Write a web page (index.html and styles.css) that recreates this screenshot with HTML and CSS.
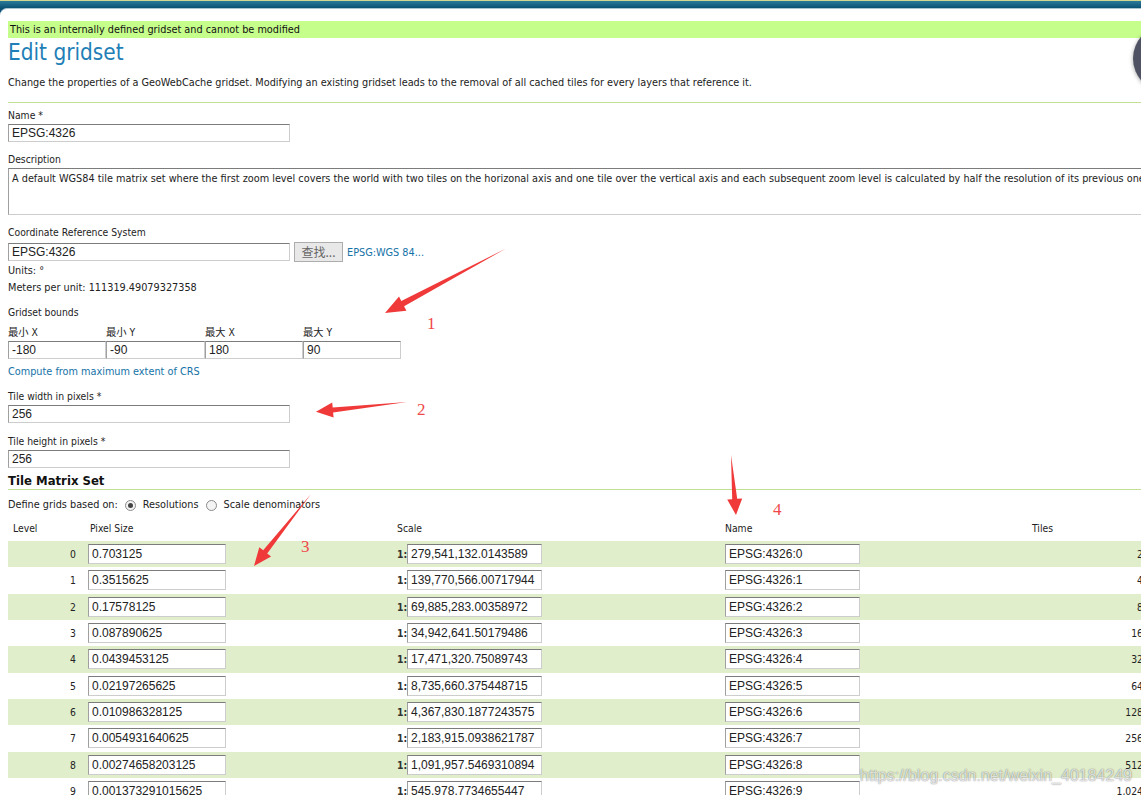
FILE: index.html
```html
<!DOCTYPE html>
<html>
<head>
<meta charset="utf-8">
<title>Edit gridset</title>
<link rel="stylesheet" href="styles.css">
</head>
<body>
<div class="shell">
  <div class="page">
    <div class="notice">This is an internally defined gridset and cannot be modified</div>
    <h1 class="title">Edit gridset</h1>
    <p class="intro">Change the properties of a GeoWebCache gridset. Modifying an existing gridset leads to the removal of all cached tiles for every layers that reference it.</p>
    <div class="sep"></div>

    <div class="field field-name">
      <label class="lbl">Name *</label>
      <input class="txt w282" type="text" value="EPSG:4326">
    </div>

    <div class="field field-desc">
      <label class="lbl">Description</label>
      <textarea class="area" wrap="off">A default WGS84 tile matrix set where the first zoom level covers the world with two tiles on the horizonal axis and one tile over the vertical axis and each subsequent zoom level is calculated by half the resolution of its previous one.</textarea>
    </div>

    <div class="field field-crs">
      <label class="lbl">Coordinate Reference System</label>
      <div class="crs-row">
        <input class="txt w282" type="text" value="EPSG:4326">
        <button class="btn">查找...</button>
        <a class="link">EPSG:WGS 84...</a>
      </div>
    </div>
    <div class="info">Units: °</div>
    <div class="info">Meters per unit: 111319.49079327358</div>

    <div class="lbl bounds-title">Gridset bounds</div>
    <div class="bounds">
      <div class="bcell"><label class="blbl">最小 X</label><input class="txt bin" type="text" value="-180"></div>
      <div class="bcell"><label class="blbl">最小 Y</label><input class="txt bin" type="text" value="-90"></div>
      <div class="bcell"><label class="blbl">最大 X</label><input class="txt bin" type="text" value="180"></div>
      <div class="bcell"><label class="blbl">最大 Y</label><input class="txt bin" type="text" value="90"></div>
    </div>
    <a class="link compute">Compute from maximum extent of CRS</a>

    <div class="field field-tw">
      <label class="lbl">Tile width in pixels *</label>
      <input class="txt w282" type="text" value="256">
    </div>
    <div class="field field-th">
      <label class="lbl">Tile height in pixels *</label>
      <input class="txt w282" type="text" value="256">
    </div>

    <h2 class="section">Tile Matrix Set</h2>
    <div class="define">
      <span>Define grids based on:</span>
      <span class="radio checked"></span><span>Resolutions</span>
      <span class="radio"></span><span>Scale denominators</span>
    </div>

    <table class="grid">
      <colgroup>
        <col class="c-level"><col class="c-pix"><col class="c-scale"><col class="c-name"><col class="c-tiles">
      </colgroup>
      <thead>
        <tr><th class="h-level">Level</th><th class="h-pix">Pixel Size</th><th>Scale</th><th>Name</th><th>Tiles</th></tr>
      </thead>
      <tbody>
        <tr class="odd"><td class="lv">0</td><td><input class="txt tin" value="0.703125"></td><td><span class="one">1:</span><input class="txt sin" value="279,541,132.0143589"></td><td><input class="txt sin" value="EPSG:4326:0"></td><td class="tiles">2</td></tr>
        <tr><td class="lv">1</td><td><input class="txt tin" value="0.3515625"></td><td><span class="one">1:</span><input class="txt sin" value="139,770,566.00717944"></td><td><input class="txt sin" value="EPSG:4326:1"></td><td class="tiles">4</td></tr>
        <tr class="odd"><td class="lv">2</td><td><input class="txt tin" value="0.17578125"></td><td><span class="one">1:</span><input class="txt sin" value="69,885,283.00358972"></td><td><input class="txt sin" value="EPSG:4326:2"></td><td class="tiles">8</td></tr>
        <tr><td class="lv">3</td><td><input class="txt tin" value="0.087890625"></td><td><span class="one">1:</span><input class="txt sin" value="34,942,641.50179486"></td><td><input class="txt sin" value="EPSG:4326:3"></td><td class="tiles">16</td></tr>
        <tr class="odd"><td class="lv">4</td><td><input class="txt tin" value="0.0439453125"></td><td><span class="one">1:</span><input class="txt sin" value="17,471,320.75089743"></td><td><input class="txt sin" value="EPSG:4326:4"></td><td class="tiles">32</td></tr>
        <tr><td class="lv">5</td><td><input class="txt tin" value="0.02197265625"></td><td><span class="one">1:</span><input class="txt sin" value="8,735,660.375448715"></td><td><input class="txt sin" value="EPSG:4326:5"></td><td class="tiles">64</td></tr>
        <tr class="odd"><td class="lv">6</td><td><input class="txt tin" value="0.010986328125"></td><td><span class="one">1:</span><input class="txt sin" value="4,367,830.1877243575"></td><td><input class="txt sin" value="EPSG:4326:6"></td><td class="tiles">128</td></tr>
        <tr><td class="lv">7</td><td><input class="txt tin" value="0.0054931640625"></td><td><span class="one">1:</span><input class="txt sin" value="2,183,915.0938621787"></td><td><input class="txt sin" value="EPSG:4326:7"></td><td class="tiles">256</td></tr>
        <tr class="odd"><td class="lv">8</td><td><input class="txt tin" value="0.00274658203125"></td><td><span class="one">1:</span><input class="txt sin" value="1,091,957.5469310894"></td><td><input class="txt sin" value="EPSG:4326:8"></td><td class="tiles">512</td></tr>
        <tr><td class="lv">9</td><td><input class="txt tin" value="0.001373291015625"></td><td><span class="one">1:</span><input class="txt sin" value="545,978.7734655447"></td><td><input class="txt sin" value="EPSG:4326:9"></td><td class="tiles">1,024</td></tr>
      </tbody>
    </table>
  </div>
</div>

<div class="fab"></div>

<svg class="annot" width="1141" height="795" viewBox="0 0 1141 795" xmlns="http://www.w3.org/2000/svg">
  <g fill="#f03a3a">
    <polygon points="506,248.5 401.3,301 399,296.6 385,313 406.4,310.8 404.1,306.3"/>
    <polygon points="407,402 332.7,407.5 332.2,402.5 316,411.7 333.6,417.5 333.1,412.5"/>
    <polygon points="311,494 263.2,550.3 259.3,547.2 254,566 271.1,556.6 267.2,553.5"/>
    <polygon points="731,455 732.2,499.2 727.2,499.6 736,515 742.2,498.4 737.2,498.8"/>
  </g>
</svg>
<span class="num n1">1</span>
<span class="num n2">2</span>
<span class="num n3">3</span>
<span class="num n4">4</span>
<div class="watermark">https://blog.csdn.net/weixin_40184249</div>
</body>
</html>
```

FILE: styles.css
```css
html, body {
  margin: 0;
  padding: 0;
  overflow: hidden;
  background: #fff;
}
body {
  font-family: "DejaVu Sans Condensed", "DejaVu Sans", sans-serif;
  font-size: 10.8px;
  color: #222;
  width: 1141px;
  height: 795px;
  position: relative;
}
.shell {
  padding-top: 8px;
  background: linear-gradient(to bottom, #d2d68e 0, #d2d68e 1px, #2b7a9a 1px, #0b5274 8px, #0b5274 100%);
  width: 1200px;
}
.page {
  background: #fff;
  border-top: 1px solid #aac4d0;
  border-top-left-radius: 7px;
  padding-left: 8px;
  min-height: 800px;
  width: 1192px;
}
.notice {
  margin-top: 12px;
  height: 17px;
  line-height: 17px;
  background: #c6fe8c;
  padding-left: 2px;
  font-size: 10.8px;
  color: #111;
}
.title {
  margin: 1px 0 0 0;
  font-size: 22.4px;
  line-height: 26px;
  font-weight: normal;
  color: #1f7fb6;
}
.intro {
  margin: 11px 0 0 0;
  line-height: 14px;
}
.sep {
  margin-top: 12px;
  height: 1px;
  background: #c2de96;
}
.field { display: flex; flex-direction: column; align-items: flex-start; }
.lbl { display: block; line-height: 14px; font-size: 10.3px; color: #222; }
.field .txt, .field .area { margin-top: 2px; }
.field-name { margin-top: 5px; }
.field-desc { margin-top: 10px; }
.field-crs { margin-top: 10px; }
.field-tw { margin-top: 10px; }
.field-th { margin-top: 11px; }

.txt {
  box-sizing: border-box;
  height: 18px;
  border: 1px solid #cdcdcd;
  border-top-color: #7c7c7c;
  border-left-color: #a0a0a0;
  padding: 0 3px;
  font-family: "Liberation Sans", Arial, sans-serif;
  font-size: 12px;
  color: #222;
  background: #fff;
  outline: none;
}
.w282 { width: 282px; }
.area {
  box-sizing: border-box;
  width: 1180px;
  height: 47px;
  border: 1px solid #cdcdcd;
  border-top-color: #7c7c7c;
  border-left-color: #a0a0a0;
  padding: 3px 3px;
  font-family: "DejaVu Sans Condensed", "DejaVu Sans", sans-serif;
  font-size: 10.8px;
  line-height: 14px;
  color: #222;
  resize: none;
  overflow: hidden;
}
.crs-row {
  margin-top: 3px;
  display: flex;
  align-items: center;
  height: 20px;
}
.crs-row .txt { margin-top: 0; }
.btn {
  box-sizing: border-box;
  margin-left: 4px;
  width: 49px;
  height: 20px;
  padding: 0;
  background: #e8e8e8;
  border: 1px solid #adadad;
  color: #666;
  font-family: "Noto Sans CJK SC", sans-serif;
  font-size: 12px;
  line-height: 18px;
}
.link {
  color: #1573a8;
  text-decoration: none;
  cursor: pointer;
}
.crs-row .link { margin-left: 4px; }
.info { line-height: 17px; }
.bounds-title { margin-top: 9px; }
.bounds {
  margin-top: 6px;
  display: grid;
  grid-template-columns: 98px 99px 98px 98px;
}
.blbl {
  display: block;
  line-height: 14px;
  font-family: "DejaVu Sans Condensed", "Noto Sans CJK SC", sans-serif;
  font-size: 10.3px;
}
.bin { width: 100%; margin-top: 2px; }
.compute { display: block; margin-top: 6px; line-height: 14px; }

.section {
  margin: 5px 0 0 0;
  font-size: 13px;
  line-height: 16px;
  font-weight: bold;
  color: #111;
  border-bottom: 1px solid #c2de96;
  width: 1133px;
}
.define {
  margin-top: 8px;
  line-height: 14px;
  display: flex;
  align-items: center;
}
.radio {
  box-sizing: border-box;
  width: 11px;
  height: 11px;
  border-radius: 50%;
  border: 1px solid #8a8a8a;
  background: #f4f4f4;
  margin: 0 7px 0 7px;
  position: relative;
}
.radio.checked::after {
  content: "";
  position: absolute;
  left: 2px;
  top: 2px;
  width: 5px;
  height: 5px;
  border-radius: 50%;
  background: #444;
}

.grid {
  margin-top: 2px;
  border-collapse: collapse;
  table-layout: fixed;
  width: 1138px;
}
.c-level { width: 80px; }
.c-pix { width: 309px; }
.c-scale { width: 328px; }
.c-name { width: 307px; }
.c-tiles { width: 114px; }
.grid th {
  height: 27px;
  padding: 0;
  text-align: left;
  font-weight: normal;
  font-size: 10.3px;
  color: #222;
}
.grid th.h-level { padding-left: 5px; }
.grid th.h-pix { padding-left: 2px; }
.grid td {
  height: 26.33px;
  padding: 0;
  vertical-align: middle;
}
.grid tr.odd td { background: #e0eecc; }
.lv { text-align: right; padding-right: 12px !important; font-size: 10.3px; }
.tiles { text-align: right; padding-right: 3px !important; font-size: 10.3px; }
.tin { width: 138px; height: 20px; }
.sin { width: 135px; height: 20px; }
.one {
  display: inline-block;
  width: 10px;
  font-weight: bold;
  font-size: 10.3px;
  color: #333;
}

.fab {
  position: absolute;
  left: 1133px;
  top: 25px;
  width: 67px;
  height: 67px;
  border-radius: 50%;
  background: #4e5262;
  box-shadow: 0 1px 4px rgba(0,0,0,0.35);
}
.annot {
  position: absolute;
  left: 0;
  top: 0;
  pointer-events: none;
}
.num {
  position: absolute;
  font-family: "Liberation Serif", serif;
  font-size: 17px;
  line-height: 20px;
  color: #f04848;
}
.n1 { left: 427px; top: 314px; }
.n2 { left: 417px; top: 400px; }
.n3 { left: 301px; top: 537px; }
.n4 { left: 773px; top: 500px; }
.watermark {
  position: absolute;
  left: 860px;
  top: 766px;
  font-family: "Liberation Sans", Arial, sans-serif;
  font-size: 16px;
  line-height: 20px;
  color: rgba(255,255,255,0.75);
  text-shadow: 0 0 1px rgba(0,0,0,0.45), 0 0 2px rgba(0,0,0,0.2);
  white-space: nowrap;
}
```
